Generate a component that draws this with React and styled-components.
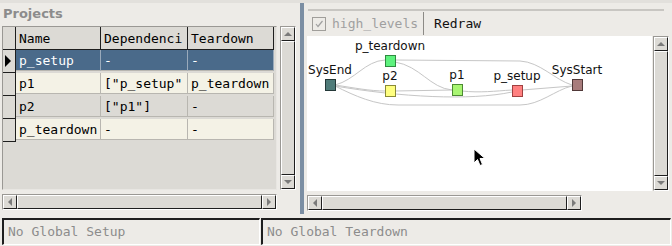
import styled, { createGlobalStyle } from 'styled-components';

const GlobalStyle = createGlobalStyle`
    body{
        margin: 0;
        background: #edebe7;
        font-family: 'DejaVu Sans', sans-serif;
    }
`

const columns = ['Name', 'Dependenci', 'Teardown']

const rows = [
    ['p_setup', '-', '-'],
    ['p1', '["p_setup"', 'p_teardown'],
    ['p2', '["p1"]', '-'],
    ['p_teardown', '-', '-'],
]

const nodes = [
    { name: 'SysEnd', x: 325, y: 79, fill: '#4f7b79', stroke: '#243838' },
    { name: 'p_teardown', x: 385, y: 55, fill: '#5ef27e', stroke: '#2f8a40' },
    { name: 'p2', x: 385, y: 85, fill: '#ffff80', stroke: '#8a8a36' },
    { name: 'p1', x: 452, y: 84, fill: '#a8f572', stroke: '#4c8a32' },
    { name: 'p_setup', x: 512, y: 85, fill: '#ff8080', stroke: '#a04040' },
    { name: 'SysStart', x: 572, y: 79, fill: '#a87c7c', stroke: '#503838' },
]

const edges = [
    'M335,85 C355,80 365,61 385,60',
    'M335,85 C355,88 370,91 385,91',
    'M335,86 C355,96 375,105 398,105 L520,105 C540,105 555,90 572,86',
    'M395,60 L520,61 C540,62 555,80 572,85',
    'M395,62 C420,66 430,88 452,90',
    'M395,91 L452,90',
    'M335,86 C400,97 470,101 512,92',
    'M462,91 C480,93 495,91 512,90',
    'M522,90 L572,86',
]

function Scrollbar({ vertical }){
    return (
        <Bar vertical={vertical}>
            <ArrowButton vertical={vertical}>
                <Arrow dir={vertical ? 'up' : 'left'} />
            </ArrowButton>
            <Thumb />
            <ArrowButton vertical={vertical}>
                <Arrow dir={vertical ? 'down' : 'right'} />
            </ArrowButton>
        </Bar>
    )
}

export default function App(){
    return <>
        <GlobalStyle />
        <Window>
            <Main>
                <LeftPane>
                    <Title>Projects</Title>
                    <TableRow>
                        <Table>
                            <RowHead />
                            {columns.map((c) => <HeadCell key={c}>{c}</HeadCell>)}
                            {rows.map((r, i) => (
                                <Row key={r[0]}>
                                    <RowHead>{i === 0 ? <Marker /> : null}</RowHead>
                                    {r.map((v, j) => (
                                        <Cell key={j} selected={i === 0} striped={i % 2 === 0}>{v}</Cell>
                                    ))}
                                </Row>
                            ))}
                        </Table>
                        <Scrollbar vertical />
                    </TableRow>
                    <HScrollRow>
                        <Scrollbar />
                    </HScrollRow>
                </LeftPane>
                <Splitter />
                <RightPane>
                    <Toolbar>
                        <CheckLabel>
                            <CheckBox>
                                <svg width="12" height="12" viewBox="0 0 12 12">
                                    <path d="M3 6 L5 8.5 L9.5 3" fill="none" stroke="#a0a0a0" strokeWidth="1.2" />
                                </svg>
                            </CheckBox>
                            high_levels
                        </CheckLabel>
                        <ToolButton>Redraw</ToolButton>
                    </Toolbar>
                    <CanvasRow>
                        <Canvas>
                            <svg width="345" height="155">
                                <g transform="translate(-307,-36)">
                                    {edges.map((d, i) => (
                                        <path key={i} d={d} fill="none" stroke="#c6c6c6" strokeWidth="1" />
                                    ))}
                                    {nodes.map((n) => (
                                        <g key={n.name}>
                                            <text x={n.x + 5} y={n.y - 5} textAnchor="middle" fontFamily="DejaVu Sans" fontSize="12" fill="#111">{n.name}</text>
                                            <rect x={n.x + 0.5} y={n.y + 0.5} width="10" height="11" fill={n.fill} stroke={n.stroke} />
                                        </g>
                                    ))}
                                </g>
                            </svg>
                            <Cursor width="14" height="20" viewBox="0 0 14 20">
                                <path d="M1 1 L1 15 L4.5 11.5 L7 17.5 L9.5 16.5 L7 10.5 L12 10.5 Z" fill="#000" stroke="#fff" strokeWidth="1" />
                            </Cursor>
                        </Canvas>
                        <Scrollbar vertical />
                    </CanvasRow>
                    <HScrollRow>
                        <Scrollbar />
                    </HScrollRow>
                </RightPane>
            </Main>
            <StatusBar>
                <StatusField width="258px">No Global Setup</StatusField>
                <StatusField width="410px">No Global Teardown</StatusField>
            </StatusBar>
        </Window>
    </>
}

const Window = styled.div`
    width: 672px;
    height: 246px;
    display: flex;
    flex-direction: column;
    background: #edebe7;
    border-top: 3px solid #e2e0dc;
    box-sizing: border-box;
    overflow: hidden;
`

const Main = styled.div`
    display: flex;
    height: 211px;
`

const LeftPane = styled.div`
    width: 297px;
    padding-left: 2px;
    display: flex;
    flex-direction: column;
    box-sizing: border-box;
`

const Title = styled.div`
    height: 23px;
    padding-left: 1px;
    font-weight: bold;
    font-size: 13px;
    line-height: 22px;
    color: #8c8c8c;
`

const TableRow = styled.div`
    display: flex;
    gap: 3px;
    height: 164px;
`

const Table = styled.div`
    width: 275px;
    height: 164px;
    box-sizing: border-box;
    border: 1px solid #9a9894;
    border-right-color: #e8e6e2;
    border-bottom-color: #e8e6e2;
    background: #dcdad5;
    display: grid;
    grid-template-columns: 13px 85px 87px 86px;
    grid-auto-rows: min-content;
    overflow: hidden;
    font-family: 'DejaVu Sans Mono', monospace;
    font-size: 13px;
`

const Row = styled.div`
    display: contents;
`

const HeadCell = styled.div`
    height: 23px;
    box-sizing: border-box;
    padding-left: 3px;
    line-height: 23px;
    background: #dcdad5;
    color: #000;
    border-right: 1px solid #1e1e1e;
    border-bottom: 1px solid #1e1e1e;
    white-space: nowrap;
    overflow: hidden;
`

const RowHead = styled.div`
    height: 21px;
    box-sizing: border-box;
    background: #dcdad5;
    border-right: 1px solid #1e1e1e;
    border-bottom: 1px solid #a8a6a2;
    display: flex;
    align-items: center;
    &:first-child{
        height: 23px;
        border-bottom-color: #1e1e1e;
    }
`

const Marker = styled.div`
    width: 0;
    height: 0;
    margin-left: 2px;
    border-top: 6px solid transparent;
    border-bottom: 6px solid transparent;
    border-left: 6px solid #000;
`

const Cell = styled.div`
    height: 21px;
    box-sizing: border-box;
    padding-left: 3px;
    line-height: 21px;
    white-space: nowrap;
    overflow: hidden;
    background: ${(p) => p.selected ? '#4a6a8a' : p.striped ? '#dcdad5' : '#f4f2e6'};
    color: ${(p) => p.selected ? '#ffffff' : '#000000'};
    border-right: 1px solid ${(p) => p.selected ? '#9aaabb' : '#b8b6b0'};
    border-bottom: 1px solid #b8b6b0;
`

const HScrollRow = styled.div`
    margin-top: 4px;
    display: flex;
`

const Bar = styled.div`
    display: flex;
    flex-direction: ${(p) => p.vertical ? 'column' : 'row'};
    width: ${(p) => p.vertical ? '16px' : '275px'};
    height: ${(p) => p.vertical ? '100%' : '16px'};
    box-sizing: border-box;
    border: 1px solid #9a9894;
    border-right-color: #ffffff;
    border-bottom-color: #ffffff;
    background: #c9c7c2;
`

const ArrowButton = styled.div`
    width: 14px;
    height: 14px;
    flex: none;
    box-sizing: border-box;
    background: #dcdad5;
    border: 1px solid #ffffff;
    border-right-color: #1e1e1e;
    border-bottom-color: #1e1e1e;
    display: flex;
    align-items: center;
    justify-content: center;
`

const Arrow = styled.div`
    width: 0;
    height: 0;
    border: 4px solid transparent;
    ${(p) => p.dir === 'up' && 'border-bottom: 4px solid #7a7a7a; border-top-width: 0;'}
    ${(p) => p.dir === 'down' && 'border-top: 4px solid #7a7a7a; border-bottom-width: 0;'}
    ${(p) => p.dir === 'left' && 'border-right: 4px solid #7a7a7a; border-left-width: 0;'}
    ${(p) => p.dir === 'right' && 'border-left: 4px solid #7a7a7a; border-right-width: 0;'}
`

const Thumb = styled.div`
    flex: 1;
    box-sizing: border-box;
    background: #dcdad5;
    border: 1px solid #ffffff;
    border-right-color: #1e1e1e;
    border-bottom-color: #1e1e1e;
`

const Splitter = styled.div`
    width: 4px;
    margin-left: 3px;
    background: #7b8ea3;
`

const RightPane = styled.div`
    flex: 1;
    padding-left: 3px;
    display: flex;
    flex-direction: column;
`

const Toolbar = styled.div`
    height: 23px;
    margin: 6px 8px 1px 1px;
    padding-top: 1px;
    border-top: 2px solid #c8c6c2;
    display: flex;
    align-items: flex-start;
    font-family: 'DejaVu Sans Mono', monospace;
    font-size: 13px;
`

const CheckLabel = styled.div`
    display: flex;
    align-items: center;
    gap: 6px;
    padding-left: 4px;
    padding-right: 5px;
    color: #a0a0a0;
    height: 23px;
    border-right: 1px solid #8c8a86;
`

const CheckBox = styled.div`
    width: 14px;
    height: 14px;
    box-sizing: border-box;
    border: 1px solid #a09e9a;
    display: flex;
    align-items: center;
    justify-content: center;
`

const ToolButton = styled.div`
    height: 23px;
    line-height: 23px;
    padding-left: 10px;
    color: #111;
`

const CanvasRow = styled.div`
    display: flex;
    gap: 1px;
    height: 155px;
`

const Canvas = styled.div`
    position: relative;
    width: 345px;
    height: 155px;
    background: #ffffff;
`

const Cursor = styled.svg`
    position: absolute;
    left: 166px;
    top: 112px;
`

const StatusBar = styled.div`
    display: flex;
    gap: 1px;
    padding: 4px 0 0 2px;
`

const StatusField = styled.div`
    width: ${(p) => p.width};
    height: 27px;
    box-sizing: border-box;
    border: 1px solid #1e1e1e;
    border-right-color: #ffffff;
    border-bottom-color: #ffffff;
    border-width: 2px 1px 1px 2px;
    padding-left: 4px;
    line-height: 24px;
    font-family: 'DejaVu Sans Mono', monospace;
    font-size: 13px;
    color: #8c8c8c;
    white-space: nowrap;
    overflow: hidden;
`
